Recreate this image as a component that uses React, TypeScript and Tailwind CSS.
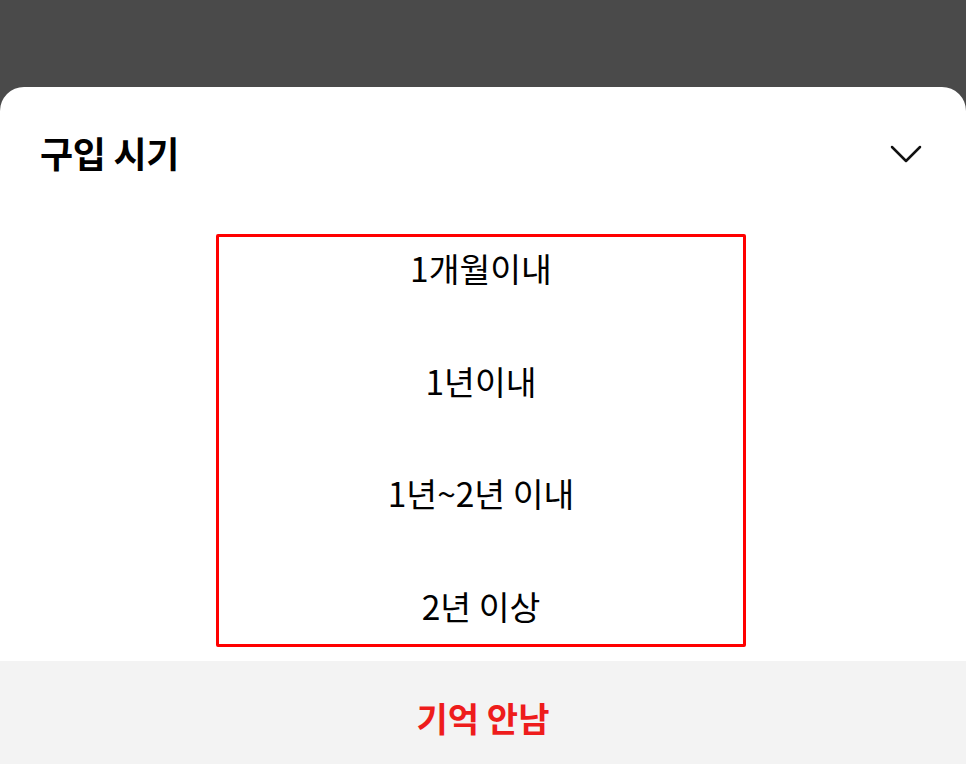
import React from "react";

const font = { fontFamily: '"Noto Sans CJK KR", "Noto Sans", sans-serif' };

export default function App() {
  const options = ["1개월이내", "1년이내", "1년~2년 이내", "2년 이상"];
  return (
    <div className="w-[966px] h-[764px] bg-[#4a4a4a] flex flex-col overflow-hidden" style={font}>
      <div className="h-[87px] shrink-0" />
      <div className="flex-1 bg-white rounded-t-[24px] flex flex-col overflow-hidden">
        <div className="flex items-center justify-between pl-[40px] pr-[44px] pt-[34px] h-[96px]">
          <div className="text-[36px] font-bold text-black leading-none tracking-[-0.3px]">구입 시기</div>
          <svg width="32" height="18" viewBox="0 0 32 18" fill="none" className="mt-[4px]">
            <path d="M2 2 L16 16 L30 2" stroke="#111" strokeWidth="2.5" strokeLinecap="round" strokeLinejoin="round" />
          </svg>
        </div>
        <div className="flex justify-start pl-[216px] pt-[51px]">
          <div className="w-[530px] h-[413px] border-[3px] border-[#ff0000] rounded-[2px] flex flex-col items-center pt-[11px] gap-[72.5px]">
            {options.map((o) => (
              <div key={o} className="h-[40px] flex items-center text-[33.5px] text-black leading-none">
                {o}
              </div>
            ))}
          </div>
        </div>
        <div className="flex-1" />
        <div className="h-[103px] bg-[#f3f3f3] flex items-center justify-center pt-[10px]">
          <span className="text-[34px] font-bold text-[#ee1c1c] leading-none">기억 안남</span>
        </div>
      </div>
    </div>
  );
}
